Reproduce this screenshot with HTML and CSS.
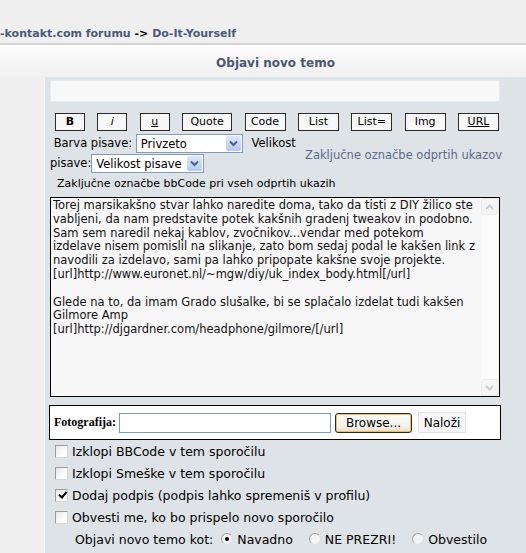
FILE: index.html
```html
<!DOCTYPE html>
<html lang="sl">
<head>
  <meta charset="UTF-8" />
  <title>Objavi novo temo</title>
  <link rel="stylesheet" href="styles.css">
</head>
<body>
  <div class="nav">-kontakt.com forumu <span class="arrow">-&gt;</span> Do-It-Yourself</div>
  <div class="title">Objavi novo temo</div>

  <div class="layout">
    <div class="side"></div>
    <div class="main">
      <input class="subject" type="text">

      <div class="toolbar">
        <button class="tb w30"><b>B</b></button>
        <button class="tb w30"><i>i</i></button>
        <button class="tb w30"><u>u</u></button>
        <button class="tb w50">Quote</button>
        <button class="tb w41">Code</button>
        <button class="tb w41">List</button>
        <button class="tb w41">List=</button>
        <button class="tb w41">Img</button>
        <button class="tb w41"><u>URL</u></button>
      </div>

      <div class="fontrow">
        <div class="fonts">&nbsp;Barva pisave: <span class="sel sel1"><select><option>Privzeto</option></select><span class="arr"><svg width="9" height="7" viewBox="0 0 9 7"><path d="M1 1.5 L4.5 5 L8 1.5" fill="none" stroke="#4d6185" stroke-width="2"/></svg></span></span> Velikost<br>pisave:<span class="sel sel2"><select><option>Velikost pisave</option></select><span class="arr"><svg width="9" height="7" viewBox="0 0 9 7"><path d="M1 1.5 L4.5 5 L8 1.5" fill="none" stroke="#4d6185" stroke-width="2"/></svg></span></span></div>
        <div class="help"><input type="text" readonly value="Zaključne označbe odprtih ukazov"></div>
      </div>

      <div class="hint">Zaključne označbe bbCode pri vseh odprtih ukazih</div>

      <div class="editor">
        <textarea wrap="off">Torej marsikakšno stvar lahko naredite doma, tako da tisti z DIY žilico ste
vabljeni, da nam predstavite potek kakšnih gradenj tweakov in podobno.
Sam sem naredil nekaj kablov, zvočnikov...vendar med potekom
izdelave nisem pomislil na slikanje, zato bom sedaj podal le kakšen link z
navodili za izdelavo, sami pa lahko pripopate kakšne svoje projekte.
[url]http://www.euronet.nl/~mgw/diy/uk_index_body.html[/url]

Glede na to, da imam Grado slušalke, bi se splačalo izdelat tudi kakšen
Gilmore Amp
[url]http://djgardner.com/headphone/gilmore/[/url]
</textarea>
        <div class="scroll">
          <div class="sbtn"><svg width="9" height="6" viewBox="0 0 9 6"><path d="M1 5 L4.5 1.5 L8 5" fill="none" stroke="#c9ccd2" stroke-width="2"/></svg></div>
          <div class="sbtn"><svg width="9" height="6" viewBox="0 0 9 6"><path d="M1 1 L4.5 4.5 L8 1" fill="none" stroke="#c9ccd2" stroke-width="2"/></svg></div>
        </div>
      </div>

      <div class="upload">
        <span class="photo">Fotografija:</span>
        <input class="file" type="text">
        <button class="browse">Browse...</button>
        <button class="load">Naloži</button>
      </div>

      <label class="opt"><input type="checkbox"> Izklopi BBCode v tem sporočilu</label>
      <label class="opt"><input type="checkbox"> Izklopi Smeške v tem sporočilu</label>
      <label class="opt"><input type="checkbox" checked> Dodaj podpis (podpis lahko spremeniš v profilu)</label>
      <label class="opt"><input type="checkbox"> Obvesti me, ko bo prispelo novo sporočilo</label>

      <div class="kind">
        Objavi novo temo kot:
        <label><input type="radio" name="kind" checked> Navadno</label>
        <label><input type="radio" name="kind"> NE PREZRI!</label>
        <label><input type="radio" name="kind"> Obvestilo</label>
      </div>
    </div>
  </div>
</body>
</html>
```

FILE: styles.css
```css
* { box-sizing: border-box; }

body {
  margin: 0;
  font-family: 'DejaVu Sans', Verdana, sans-serif;
  background: #dee3e7;
  color: #000;
}

.nav {
  height: 43px;
  padding-top: 27px;
  background: #efefef;
  font-size: 11px;
  font-weight: bold;
  line-height: 14px;
  color: #4a5a7c;
  white-space: nowrap;
}

.nav .arrow { color: #000; }

.title {
  height: 34px;
  border-top: 2px solid #d4d4d4;
  background: linear-gradient(#fdfdfd, #f1f1f1);
  padding: 4px 0 0 25px;
  text-align: center;
  font-size: 12px;
  font-weight: bold;
  line-height: 28px;
  color: #4d5574;
}

.layout {
  display: flex;
  min-height: 476px;
}

.side {
  flex: none;
  width: 45px;
  background: #efefef;
  border-right: 1px solid #f6f6f6;
}

.main {
  flex: 1;
  min-width: 0;
  padding: 3px 26px 0 5px;
}

.subject {
  display: block;
  width: 100%;
  height: 22px;
  border: 1px solid #e6e9ec;
  background: #f8f8f8;
}

/* bbcode buttons */
.toolbar {
  display: flex;
  justify-content: space-between;
  margin: 11px 1px 0 5px;
}

.tb {
  height: 18px;
  padding: 0;
  border: 1px solid #2b2b2b;
  background: #f7f7f7;
  font-family: 'DejaVu Sans', Verdana, sans-serif;
  font-size: 11px;
  line-height: 16px;
  color: #000;
}

.w30 { width: 30px; }
.w41 { width: 41px; }
.w50 { width: 50px; }

.fontrow {
  display: flex;
  align-items: center;
  margin-top: 2px;
}

.fonts {
  flex: none;
  width: 252px;
  font-size: 11.5px;
  line-height: 20px;
}

.sel {
  display: inline-flex;
  vertical-align: middle;
  height: 19px;
  border: 1px solid #7f9db9;
  background: #fff;
}

.sel1 { width: 107px; margin-right: 5px; }
.sel2 { width: 113px; }

.sel select {
  flex: 1;
  min-width: 0;
  appearance: none;
  border: 0;
  background: transparent;
  padding: 0 0 0 4px;
  font-family: inherit;
  font-size: 11.5px;
  color: #000;
}

.arr {
  width: 15px;
  margin: 1px;
  border-radius: 2px;
  background: linear-gradient(#dce7fc, #b6c9f3);
  display: flex;
  align-items: center;
  justify-content: center;
}

.help input {
  width: 200px;
  margin-left: 3px;
  padding: 0;
  border: 0;
  background: transparent;
  font-family: inherit;
  font-size: 11.5px;
  color: #5c6b8b;
}

.hint {
  margin: 4px 0 0 7px;
  font-size: 11px;
  line-height: 14px;
}

/* message box */
.editor {
  display: flex;
  height: 200px;
  margin-top: 6px;
  border: 1px solid #000;
  background: #f7f7f7;
}

.editor textarea {
  flex: 1;
  min-width: 0;
  border: 0;
  background: transparent;
  resize: none;
  overflow: hidden;
  padding: 1px 2px;
  font-family: 'DejaVu Sans', Verdana, sans-serif;
  font-size: 11.5px;
  line-height: 13.8px;
  color: #111;
}

.scroll {
  flex: none;
  width: 17px;
  margin-right: 1px;
  display: flex;
  flex-direction: column;
  justify-content: space-between;
  background: #fbfbfb;
}

.sbtn {
  height: 17px;
  border: 1px solid #ebebeb;
  border-radius: 2px;
  background: #f4f4f4;
  display: flex;
  align-items: center;
  justify-content: center;
}

/* picture upload */
.upload {
  display: flex;
  align-items: center;
  height: 35px;
  margin: 8px -1px 0 -1px;
  padding: 0 4px;
  border: 1px solid #000;
  background: #fff;
}

.photo {
  font-family: 'Liberation Serif', 'Times New Roman', serif;
  font-size: 12px;
  font-weight: bold;
}

.file {
  width: 212px;
  height: 20px;
  margin-left: 3px;
  border: 1px solid #7f9db9;
  background: #fff;
}

.browse {
  width: 77px;
  height: 20px;
  margin-left: 4px;
  padding: 0;
  border: 1px solid #2a2a2a;
  border-radius: 3px;
  background: linear-gradient(#fefefe, #f1efe6 75%, #e2ddc8);
  box-shadow: inset 0 0 0 1px #f2be5c;
  font-family: 'DejaVu Sans', Verdana, sans-serif;
  font-size: 12px;
  color: #000;
}

.load {
  width: 48px;
  height: 21px;
  margin-left: 6px;
  padding: 0;
  border: 1px solid #e2e2e2;
  background: #f6f6f6;
  font-family: 'DejaVu Sans', Verdana, sans-serif;
  font-size: 12px;
  color: #000;
}

/* options */
.opt {
  display: flex;
  align-items: center;
  height: 22px;
  padding-left: 5px;
  font-size: 12.5px;
}

.opt input[type=checkbox] {
  appearance: none;
  width: 13px;
  height: 13px;
  margin: 0 4px 0 0;
  border: 1px solid;
  border-color: #9c9c9c #d6d6d6 #d6d6d6 #9c9c9c;
  background: linear-gradient(135deg, #e6e6e6, #fff 70%);
  position: relative;
}

.opt input[type=checkbox]:checked::after {
  content: '';
  position: absolute;
  left: 2px;
  top: 1px;
  width: 6px;
  height: 3px;
  border-left: 2px solid #000;
  border-bottom: 2px solid #000;
  transform: rotate(-50deg) translate(0, 1px);
}

.kind {
  display: flex;
  align-items: center;
  height: 22px;
  padding-left: 25px;
  font-size: 12.5px;
}

.kind label {
  display: flex;
  align-items: center;
  margin-left: 8px;
}

.kind label + label { margin-left: 16px; }

.kind input {
  appearance: none;
  width: 12px;
  height: 12px;
  margin: 0 4px 0 0;
  border: 1px solid;
  border-color: #a6a6a6 #e0e0e0 #e0e0e0 #a6a6a6;
  border-radius: 50%;
  background: #f4f4f4;
  display: flex;
  align-items: center;
  justify-content: center;
}

.kind input:checked::after {
  content: '';
  width: 4px;
  height: 4px;
  border-radius: 50%;
  background: #000;
}
```
